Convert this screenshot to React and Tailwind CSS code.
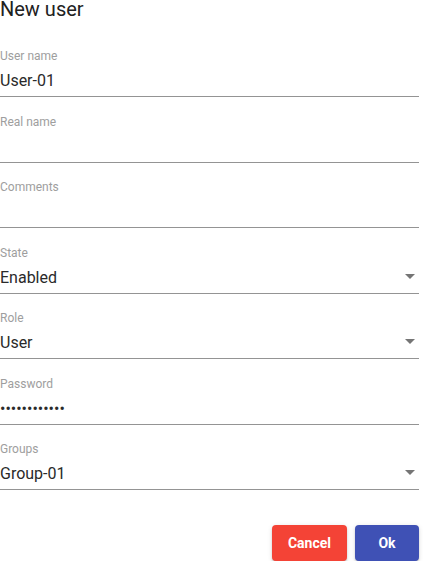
import React from "react";

function Field({ label, value, select, first }) {
  return (
    <div className={`relative border-b border-[#949494] h-[49px] ${first ? "mt-[30px]" : "mt-[16.5px]"}`}>
      <div className="text-[12px] leading-[16px] text-[#9e9e9e]">{label}</div>
      <div className="mt-[5px] text-[16px] leading-[24px] text-[#2a2a2a]">{value}</div>
      {select && (
        <svg className="absolute right-[4px] top-[29px]" width="10" height="5" viewBox="0 0 10 5">
          <path d="M0 0h10L5 5z" fill="#757575" />
        </svg>
      )}
    </div>
  );
}

export default function App() {
  return (
    <div className="w-[419px] bg-white" style={{ fontFamily: "Roboto, 'Noto Sans', sans-serif" }}>
      <div className="text-[20px] leading-[18px] text-[#212121]">New user</div>
      <Field first label="User name" value="User-01" />
      <Field label="Real name" value="" />
      <Field label="Comments" value="" />
      <Field label="State" value="Enabled" select />
      <Field label="Role" value="User" select />
      <Field label="Password" value="••••••••••••" />
      <Field label="Groups" value="Group-01" select />
      <div className="mt-[35px] flex justify-end gap-2">
        <button className="h-9 px-4 rounded bg-[#f44336] text-white text-[14px] font-bold shadow-[0_3px_1px_-2px_rgba(0,0,0,0.2),0_2px_2px_0_rgba(0,0,0,0.14),0_1px_5px_0_rgba(0,0,0,0.12)]">
          Cancel
        </button>
        <button className="h-9 min-w-[64px] px-4 rounded bg-[#3f51b5] text-white text-[14px] font-bold shadow-[0_3px_1px_-2px_rgba(0,0,0,0.2),0_2px_2px_0_rgba(0,0,0,0.14),0_1px_5px_0_rgba(0,0,0,0.12)]">
          Ok
        </button>
      </div>
    </div>
  );
}
